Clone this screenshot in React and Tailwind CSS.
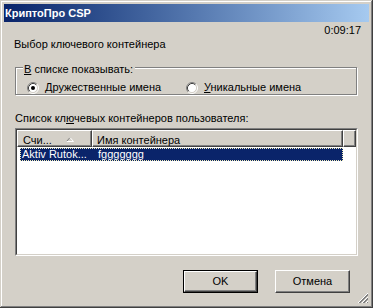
import React from 'react'

const Radio = ({ checked }) => (
  <svg width="12" height="12" viewBox="0 0 12 12" className="shrink-0">
    <circle cx="6" cy="6" r="4.5" fill="#fff" />
    <path d="M2.11 9.89 A5.5 5.5 0 0 1 9.89 2.11" stroke="#808080" fill="none" />
    <path d="M9.89 2.11 A5.5 5.5 0 0 1 2.11 9.89" stroke="#fff" fill="none" />
    <path d="M2.82 9.18 A4.5 4.5 0 0 1 9.18 2.82" stroke="#404040" fill="none" />
    <path d="M9.18 2.82 A4.5 4.5 0 0 1 2.82 9.18" stroke="#d4d0c8" fill="none" />
    {checked && <circle cx="6" cy="6" r="2" fill="#000" />}
  </svg>
)

const Button = ({ children, isDefault }) => (
  <div className={`w-[75px] h-[23px] ${isDefault ? 'border border-black' : ''}`}>
    <div className="w-full h-full flex items-center justify-center border border-t-white border-l-white border-b-[#404040] border-r-[#404040] shadow-[inset_-1px_-1px_#808080]">
      {children}
    </div>
  </div>
)

const HeaderCell = ({ className, children }) => (
  <div
    className={`h-[17px] flex items-start pt-[3px] border border-t-white border-l-white border-b-[#404040] border-r-[#404040] shadow-[inset_-1px_-1px_#808080] ${className}`}
  >
    {children}
  </div>
)

export default function App() {
  return (
    <div className="w-[373px] h-[308px] bg-[#d4d0c8] p-[4px] flex flex-col text-black text-[11px] leading-[13px] font-['Liberation_Sans',Arial,sans-serif] shadow-[inset_-1px_-1px_#404040,inset_1px_1px_#d4d0c8,inset_-2px_-2px_#808080,inset_2px_2px_#fff]">
      <div className="h-[18px] shrink-0 bg-gradient-to-r from-[#0a246a] to-[#a6caf0] flex items-center pl-[1px] text-white font-bold">
        КриптоПро CSP
      </div>

      <div className="flex-1 flex flex-col px-[10px] relative">
        <div className="self-end mt-[2px] -mr-[2px]">0:09:17</div>
        <div className="mt-[1px]">Выбор ключевого контейнера</div>

        <div className="relative mt-[16px] ml-[1px] w-[342px] h-[28px] border border-[#808080] shadow-[inset_1px_1px_#fff,1px_1px_#fff] pl-[11px] pt-[13px] flex">
          <div className="absolute -top-[5px] left-[7px] bg-[#d4d0c8] pl-[1px] pr-[2px]">
            <span className="underline">В</span> списке показывать:
          </div>
          <div className="w-[159px] flex items-center gap-[6px]">
            <Radio checked />
            <span>
              <span className="underline">Д</span>ружественные имена
            </span>
          </div>
          <div className="flex items-center gap-[6px]">
            <Radio />
            <span>
              <span className="underline">У</span>никальные имена
            </span>
          </div>
        </div>

        <div className="mt-[17px] ml-[1px]">
          Список кл<span className="underline">ю</span>чевых контейнеров пользователя:
        </div>

        <div className="mt-[3px] ml-[1px] w-[343px] h-[128px] border border-t-[#808080] border-l-[#808080] border-b-white border-r-white">
          <div className="w-full h-full bg-white border border-t-[#404040] border-l-[#404040] border-b-[#d4d0c8] border-r-[#d4d0c8] flex flex-col">
            <div className="flex bg-[#d4d0c8]">
              <HeaderCell className="w-[75px] pl-[5px]">
                <span>Счи...</span>
                <svg width="8" height="5" viewBox="0 0 8 5" className="ml-auto mr-[17px] mt-[3px]">
                  <path d="M0.5 4.5 L4 0.5" stroke="#808080" fill="none" />
                  <path d="M4 0.5 L7.5 4.5 L0.5 4.5" stroke="#fff" fill="none" />
                </svg>
              </HeaderCell>
              <HeaderCell className="w-[251px] pl-[4px]">Имя контейнера</HeaderCell>
              <HeaderCell className="flex-1" />
            </div>

            <div className="mt-[1px] ml-[3px] w-[323px] h-[13px] bg-[#0a246a] text-white border border-dotted border-[#f2eeb8] flex leading-[11px]">
              <span className="w-[71px] pl-[1px] whitespace-nowrap overflow-hidden">Aktiv Rutok...</span>
              <span className="pl-[6px]">fggggggg</span>
            </div>
          </div>
        </div>

        <div className="mt-[14px] flex justify-end gap-[17px] mr-[9px]">
          <Button isDefault>OK</Button>
          <Button>Отмена</Button>
        </div>

        <svg width="12" height="12" viewBox="0 0 12 12" className="absolute right-0 bottom-0">
          <path d="M11 1 L1 11" stroke="#fff" />
          <path d="M11 2 L2 11 M11 3 L3 11" stroke="#808080" />
          <path d="M11 5 L5 11" stroke="#fff" />
          <path d="M11 6 L6 11 M11 7 L7 11" stroke="#808080" />
          <path d="M11 9 L9 11" stroke="#fff" />
          <path d="M11 10 L10 11" stroke="#808080" />
        </svg>
      </div>
    </div>
  )
}
